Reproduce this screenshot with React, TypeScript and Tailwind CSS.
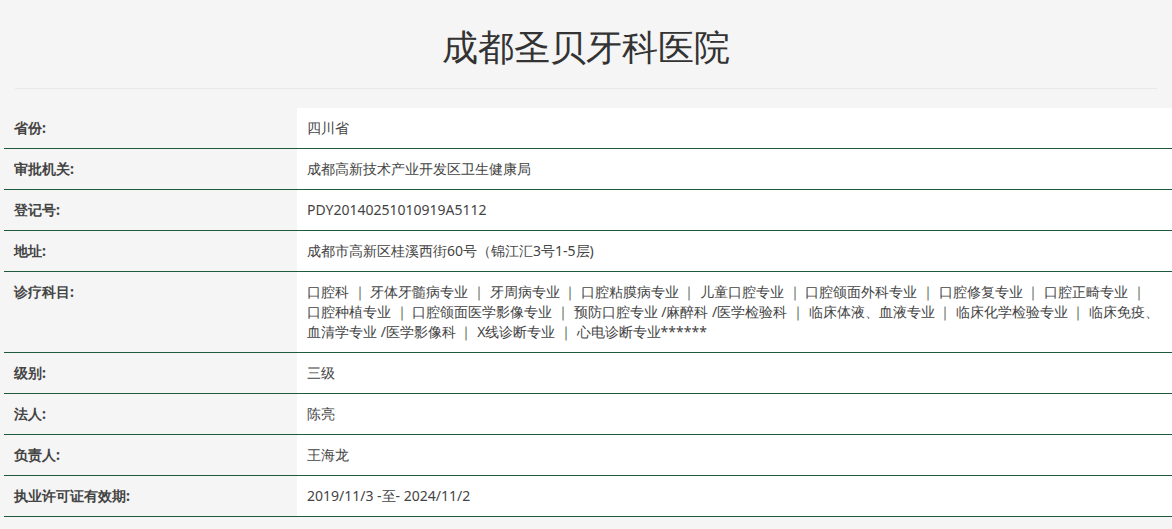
const rows: [string, string][] = [
  ['省份:', '四川省'],
  ['审批机关:', '成都高新技术产业开发区卫生健康局'],
  ['登记号:', 'PDY20140251010919A5112'],
  ['地址:', '成都市高新区桂溪西街60号（锦江汇3号1-5层)'],
  [
    '诊疗科目:',
    '口腔科 ｜ 牙体牙髓病专业 ｜ 牙周病专业 ｜ 口腔粘膜病专业 ｜ 儿童口腔专业 ｜ 口腔颌面外科专业 ｜ 口腔修复专业 ｜ 口腔正畸专业 ｜ 口腔种植专业 ｜ 口腔颌面医学影像专业 ｜ 预防口腔专业 /麻醉科 /医学检验科 ｜ 临床体液、血液专业 ｜ 临床化学检验专业 ｜ 临床免疫、血清学专业 /医学影像科 ｜ X线诊断专业 ｜ 心电诊断专业******',
  ],
  ['级别:', '三级'],
  ['法人:', '陈亮'],
  ['负责人:', '王海龙'],
  ['执业许可证有效期:', '2019/11/3 -至- 2024/11/2'],
];

export default function App() {
  return (
    <div className="min-h-[529px] bg-[#f5f5f5] text-[#333] font-['Microsoft_YaHei','Noto_Sans_CJK_SC',sans-serif]">
      <div className="mx-[15px] h-[89px] border-b border-[#e8e8e8] flex items-center justify-center">
        <h1 className="text-[36px] text-[#333] pt-[6px]">成都圣贝牙科医院</h1>
      </div>
      <div className="ml-[4px] mt-[19px]">
        {rows.map(([k, v]) => (
          <div key={k} className="flex border-b border-[#1f5a3f] text-[14px] leading-[20px]">
            <div className="w-[293px] shrink-0 px-[10px] py-[10px] font-bold text-[#444]">{k}</div>
            <div className="flex-1 bg-white px-[10px] py-[10px] text-[#444] break-all">{v}</div>
          </div>
        ))}
      </div>
    </div>
  );
}
